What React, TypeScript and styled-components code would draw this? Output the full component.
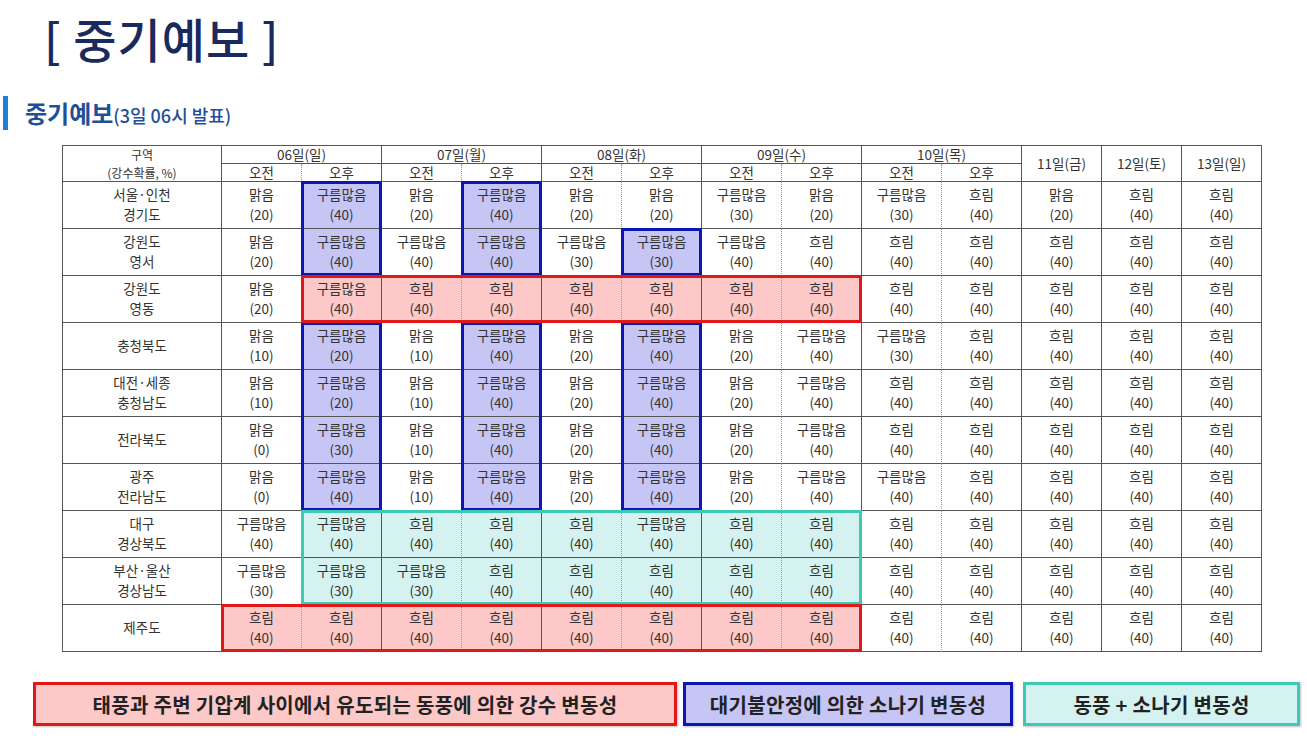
import React from 'react';
import styled, { createGlobalStyle } from 'styled-components';

type Kind = 'red' | 'blue' | 'cyan';

const palette: Record<Kind, { line: string; fill: string }> = {
  red: { line: '#e01818', fill: '#fcc8c8' },
  blue: { line: '#0c16b0', fill: '#c6c6f6' },
  cyan: { line: '#3ec8b6', fill: '#d4f2ef' },
};

const days = [
  { label: '06일(일)', split: true },
  { label: '07일(월)', split: true },
  { label: '08일(화)', split: true },
  { label: '09일(수)', split: true },
  { label: '10일(목)', split: true },
  { label: '11일(금)', split: false },
  { label: '12일(토)', split: false },
  { label: '13일(일)', split: false },
];

type Cell = [string, number];
const C = (n: number): Cell => ['구름많음', n];
const S = (n: number): Cell => ['맑음', n];
const H = (n: number): Cell => ['흐림', n];

const rows: { name: string[]; cells: Cell[] }[] = [
  {
    name: ['서울·인천', '경기도'],
    cells: [S(20), C(40), S(20), C(40), S(20), S(20), C(30), S(20), C(30), H(40), S(20), H(40), H(40)],
  },
  {
    name: ['강원도', '영서'],
    cells: [S(20), C(40), C(40), C(40), C(30), C(30), C(40), H(40), H(40), H(40), H(40), H(40), H(40)],
  },
  {
    name: ['강원도', '영동'],
    cells: [S(20), C(40), H(40), H(40), H(40), H(40), H(40), H(40), H(40), H(40), H(40), H(40), H(40)],
  },
  {
    name: ['충청북도'],
    cells: [S(10), C(20), S(10), C(40), S(20), C(40), S(20), C(40), C(30), H(40), H(40), H(40), H(40)],
  },
  {
    name: ['대전·세종', '충청남도'],
    cells: [S(10), C(20), S(10), C(40), S(20), C(40), S(20), C(40), H(40), H(40), H(40), H(40), H(40)],
  },
  {
    name: ['전라북도'],
    cells: [S(0), C(30), S(10), C(40), S(20), C(40), S(20), C(40), H(40), H(40), H(40), H(40), H(40)],
  },
  {
    name: ['광주', '전라남도'],
    cells: [S(0), C(40), S(10), C(40), S(20), C(40), S(20), C(40), C(40), H(40), H(40), H(40), H(40)],
  },
  {
    name: ['대구', '경상북도'],
    cells: [C(40), C(40), H(40), H(40), H(40), C(40), H(40), H(40), H(40), H(40), H(40), H(40), H(40)],
  },
  {
    name: ['부산·울산', '경상남도'],
    cells: [C(30), C(30), C(30), H(40), H(40), H(40), H(40), H(40), H(40), H(40), H(40), H(40), H(40)],
  },
  {
    name: ['제주도'],
    cells: [H(40), H(40), H(40), H(40), H(40), H(40), H(40), H(40), H(40), H(40), H(40), H(40), H(40)],
  },
];

// data column / data row ranges, inclusive
const groups: { kind: Kind; c1: number; c2: number; r1: number; r2: number }[] = [
  { kind: 'blue', c1: 1, c2: 1, r1: 0, r2: 1 },
  { kind: 'blue', c1: 3, c2: 3, r1: 0, r2: 1 },
  { kind: 'blue', c1: 5, c2: 5, r1: 1, r2: 1 },
  { kind: 'blue', c1: 1, c2: 1, r1: 3, r2: 6 },
  { kind: 'blue', c1: 3, c2: 3, r1: 3, r2: 6 },
  { kind: 'blue', c1: 5, c2: 5, r1: 3, r2: 6 },
  { kind: 'red', c1: 1, c2: 7, r1: 2, r2: 2 },
  { kind: 'cyan', c1: 1, c2: 7, r1: 7, r2: 8 },
  { kind: 'red', c1: 0, c2: 7, r1: 9, r2: 9 },
];

const fillAt = (c: number, r: number) => {
  const g = groups.find(g => c >= g.c1 && c <= g.c2 && r >= g.r1 && r <= g.r2);
  return g ? palette[g.kind].fill : undefined;
};

const legend: { kind: Kind; width: number; text: string }[] = [
  { kind: 'red', width: 644, text: '태풍과 주변 기압계 사이에서 유도되는 동풍에 의한 강수 변동성' },
  { kind: 'blue', width: 330, text: '대기불안정에 의한 소나기 변동성' },
  { kind: 'cyan', width: 277, text: '동풍 + 소나기 변동성' },
];

export default function App() {
  return (
    <>
      <GlobalStyle />
      <Page>
        <Title>[ 중기예보 ]</Title>
        <SubTitle>
          <Bar />
          <SubMain>중기예보</SubMain>
          <SubNote>(3일 06시 발표)</SubNote>
        </SubTitle>

        <Grid>
          <Cell $col="1" $row="1 / 3" $small>
            <span>구역</span>
            <span>(강수확률, %)</span>
          </Cell>
          {days.map((d, i) =>
            d.split ? (
              <React.Fragment key={d.label}>
                <Cell $col={`${i * 2 + 2} / ${i * 2 + 4}`} $row="1">
                  {d.label}
                </Cell>
                <Cell $col={`${i * 2 + 2}`} $row="2" $dashed>
                  오전
                </Cell>
                <Cell $col={`${i * 2 + 3}`} $row="2">
                  오후
                </Cell>
              </React.Fragment>
            ) : (
              <Cell key={d.label} $col={`${i + 7}`} $row="1 / 3">
                {d.label}
              </Cell>
            )
          )}

          {rows.map((row, r) => (
            <React.Fragment key={r}>
              <Cell $col="1" $row={`${r + 3}`}>
                {row.name.map(n => (
                  <span key={n}>{n}</span>
                ))}
              </Cell>
              {row.cells.map(([w, p], c) => (
                <Cell
                  key={c}
                  $col={`${c + 2}`}
                  $row={`${r + 3}`}
                  $fill={fillAt(c, r)}
                  $dashed={c < 10 && c % 2 === 0}
                >
                  <span>{w}</span>
                  <span>({p})</span>
                </Cell>
              ))}
            </React.Fragment>
          ))}

          {groups.map((g, i) => (
            <Outline
              key={i}
              $kind={g.kind}
              $col={`${g.c1 + 2} / ${g.c2 + 3}`}
              $row={`${g.r1 + 3} / ${g.r2 + 4}`}
            />
          ))}
        </Grid>

        <Legend>
          {legend.map(l => (
            <LegendBox key={l.kind} $kind={l.kind} $width={l.width}>
              {l.text}
            </LegendBox>
          ))}
        </Legend>
      </Page>
    </>
  );
}

const GlobalStyle = createGlobalStyle`
  html, body {
    margin: 0;
    padding: 0;
    background: #fff;
  }
  body {
    font-family: "Noto Sans CJK KR", "Noto Sans", sans-serif;
    color: #333;
  }
`;

const Page = styled.div`
  width: 1307px;
  height: 751px;
  padding-top: 10px;
  box-sizing: border-box;
  overflow: hidden;
`;

const Title = styled.h1`
  margin: 0 0 0 44px;
  font-size: 47px;
  line-height: 56px;
  font-weight: 500;
  color: #1b2a5c;
  letter-spacing: 1px;
`;

const SubTitle = styled.div`
  display: flex;
  align-items: baseline;
  margin-top: 30px;
  height: 34px;
`;

const Bar = styled.div`
  align-self: stretch;
  width: 5px;
  margin-left: 3px;
  margin-right: 17px;
  background: #1a80d8;
`;

const SubMain = styled.span`
  font-size: 24px;
  line-height: 34px;
  font-weight: 700;
  color: #1f4f96;
`;

const SubNote = styled.span`
  font-size: 18px;
  font-weight: 500;
  color: #1f4f96;
`;

const Grid = styled.div`
  display: grid;
  grid-template-columns: 159px repeat(13, 80px);
  grid-template-rows: 18px 18px repeat(10, 47px);
  margin: 15px 0 0 62px;
  width: max-content;
  border-left: 1px solid #555;
  border-top: 1px solid #555;
`;

interface CellProps {
  $col: string;
  $row: string;
  $fill?: string;
  $dashed?: boolean;
  $small?: boolean;
}

const Cell = styled.div<CellProps>`
  grid-column: ${({ $col }) => $col};
  grid-row: ${({ $row }) => $row};
  display: flex;
  flex-direction: column;
  align-items: center;
  justify-content: center;
  box-sizing: border-box;
  border-bottom: 1px solid #555;
  border-right: ${({ $dashed }) => ($dashed ? '1px dotted #999' : '1px solid #555')};
  background: ${({ $fill }) => $fill ?? '#fff'};
  font-size: ${({ $small }) => ($small ? '12px' : '13.5px')};
  line-height: ${({ $small }) => ($small ? '17.5px' : '19.6px')};
  color: #333;
  white-space: nowrap;
`;

const Outline = styled.div<{ $kind: Kind; $col: string; $row: string }>`
  grid-column: ${({ $col }) => $col};
  grid-row: ${({ $row }) => $row};
  margin: -1px 0 0 -1px;
  border: 3px solid ${({ $kind }) => palette[$kind].line};
  z-index: 1;
  pointer-events: none;
`;

const Legend = styled.div`
  display: flex;
  gap: 6px;
  margin: 30px 0 0 33px;
`;

const LegendBox = styled.div<{ $kind: Kind; $width: number }>`
  width: ${({ $width }) => $width}px;
  height: 44px;
  box-sizing: border-box;
  display: flex;
  align-items: center;
  justify-content: center;
  border: 3px solid ${({ $kind }) => palette[$kind].line};
  background: ${({ $kind }) => palette[$kind].fill};
  box-shadow: 1px 1px 2px rgba(0, 0, 0, 0.25);
  font-size: 20px;
  font-weight: 700;
  letter-spacing: 0.3px;
  color: #222;
  &:nth-child(3) {
    margin-left: 4px;
  }
`;
